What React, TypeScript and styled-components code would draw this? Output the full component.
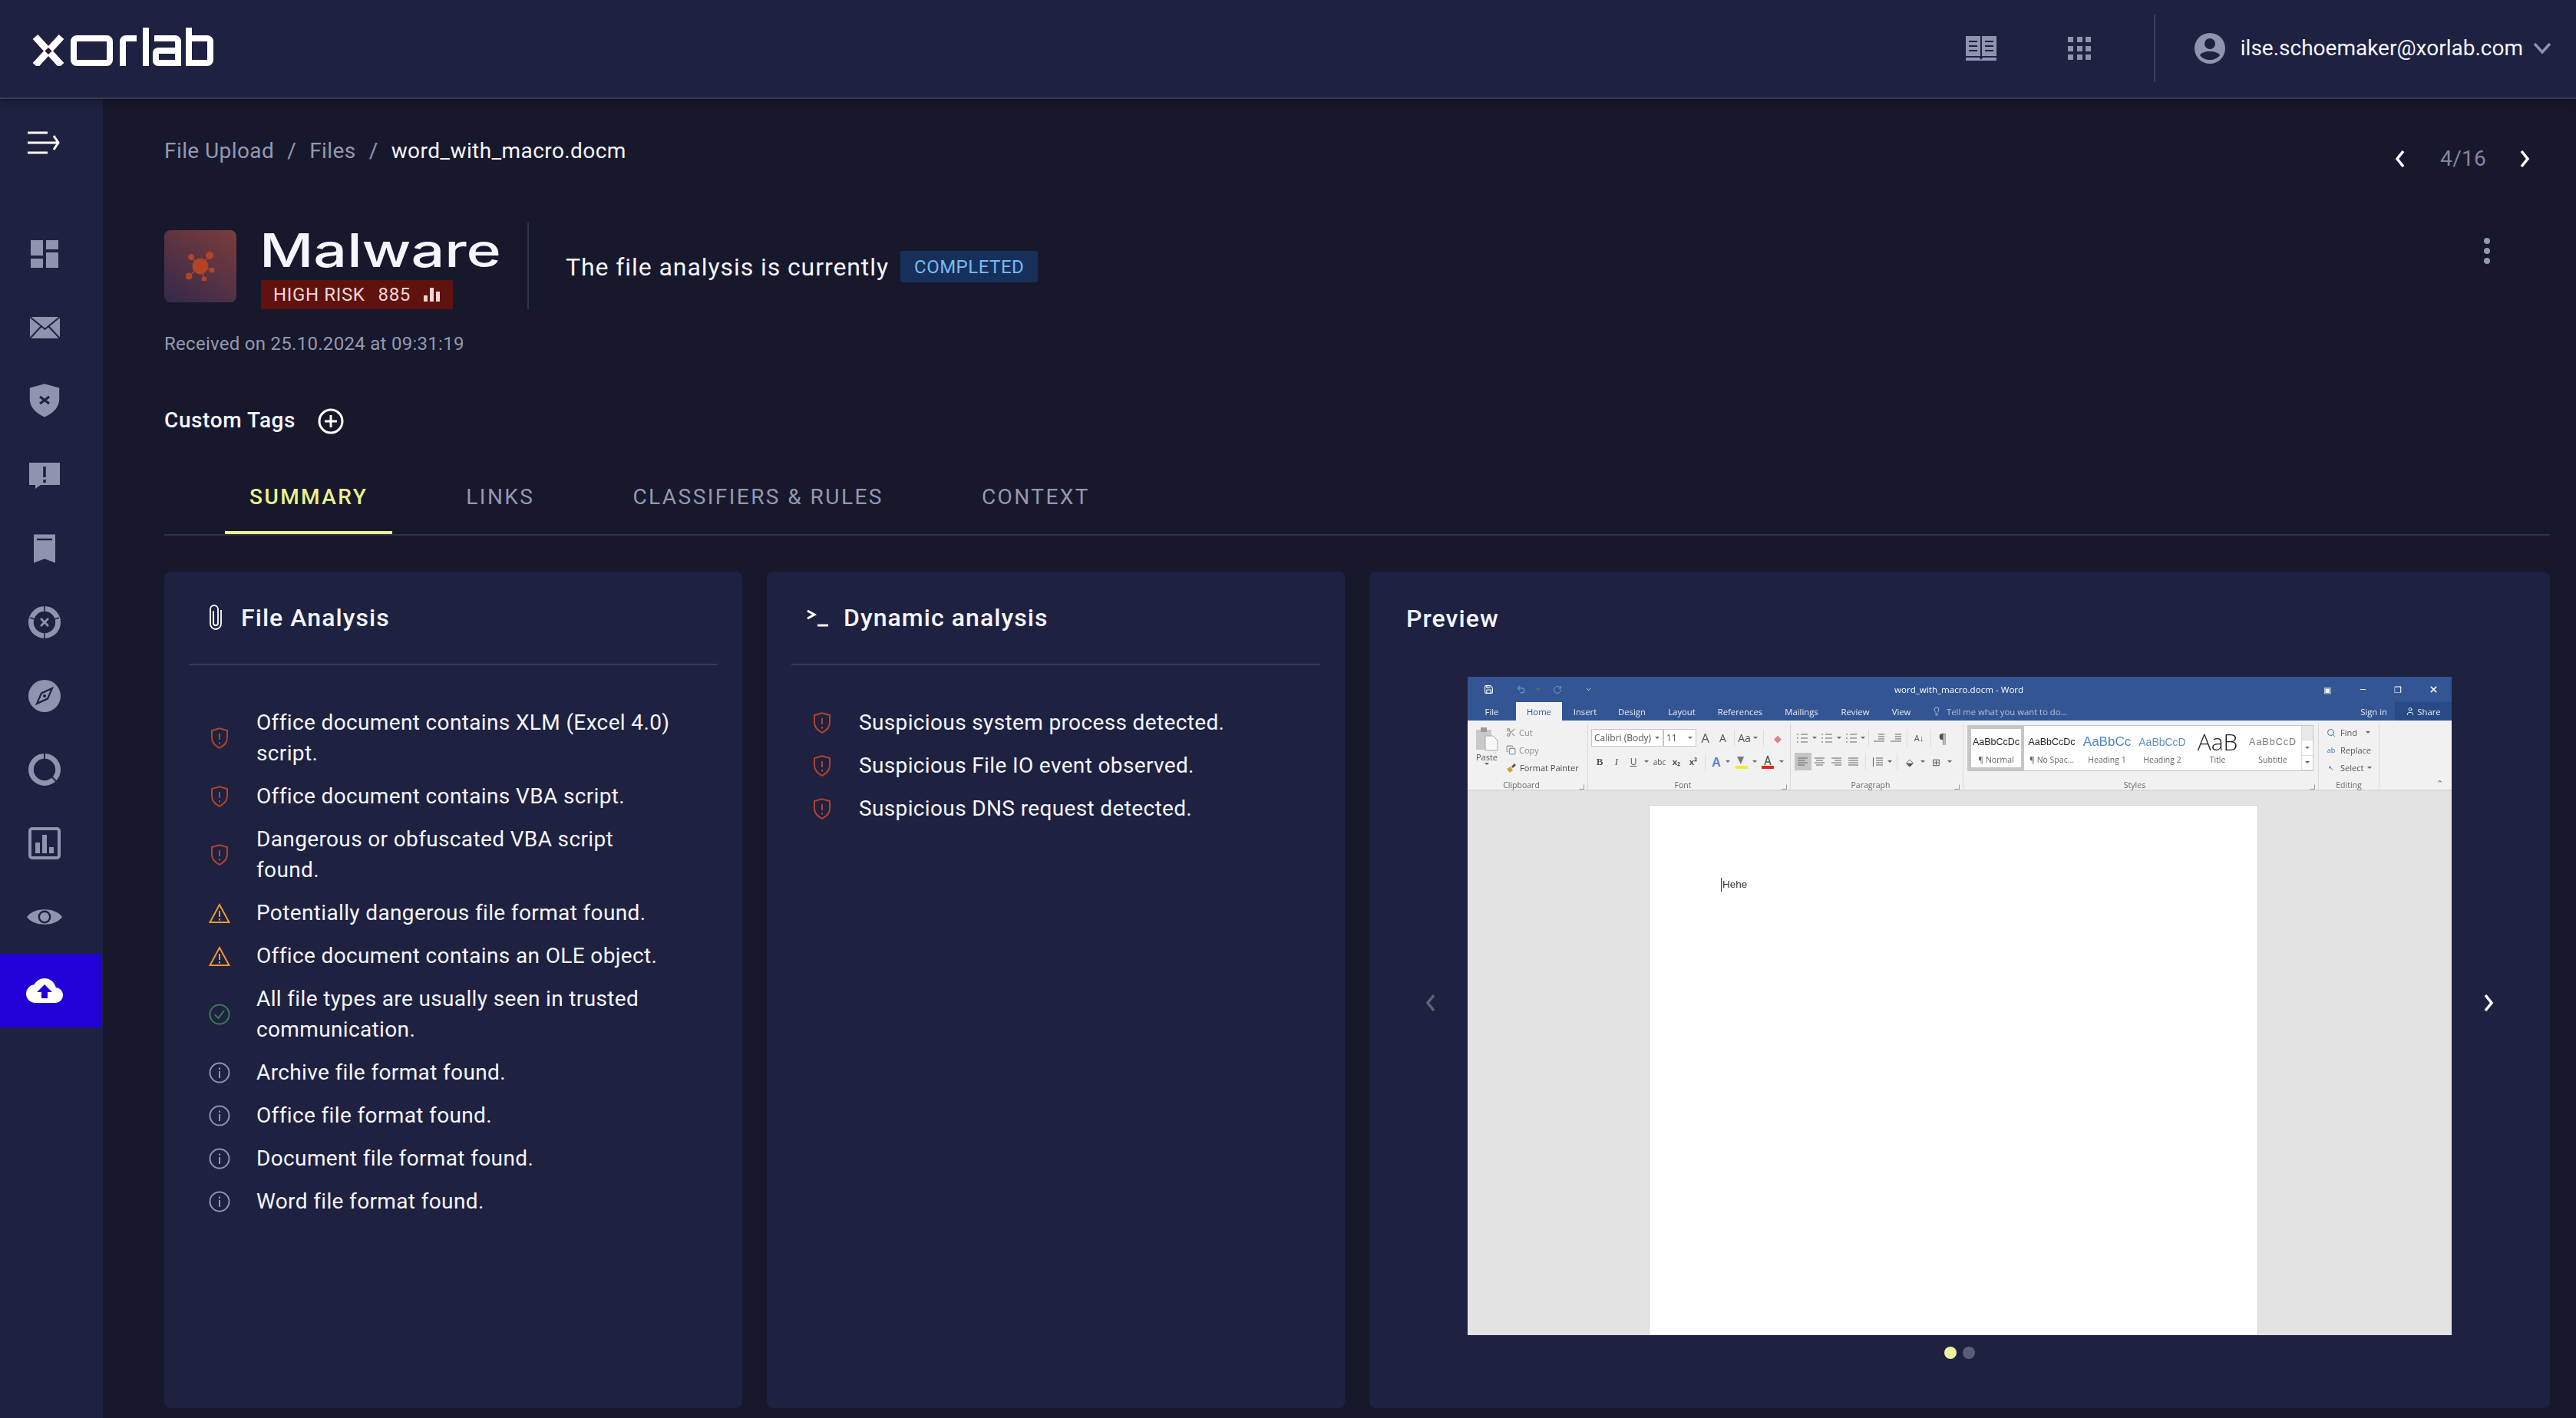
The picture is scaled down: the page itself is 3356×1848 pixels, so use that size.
import styled, { createGlobalStyle } from 'styled-components';
import { MdDashboard, MdCloudUpload } from 'react-icons/md';
import { ChevronDown, Copy, Lightbulb, Minus, RotateCw, Save, Scissors, Search, Undo2, User, X } from 'lucide-react';

const GlobalStyle = createGlobalStyle`
  html, body { margin: 0; padding: 0; background: #18182c; }
  body { font-family: Roboto, "Liberation Sans", sans-serif; color: #f4f6ff; }
  * { box-sizing: border-box; }
`;

const Page = styled.div`
  width: 3356px;
  height: 1848px;
  display: flex;
  flex-direction: column;
  overflow: hidden;
  background: #18182c;
`;

/* top bar */
const Header = styled.header`
  position: relative;
  z-index: 2;
  height: 129px;
  flex: none;
  display: flex;
  align-items: center;
  padding: 0 32px 2px 42px;
  background: #1e2140;
  border-bottom: 2px solid #363a52;
  box-shadow: 0 4px 12px rgba(0, 0, 0, 0.3);
`;

const Logo = styled.svg`
  width: 236px;
  height: 50px;
  margin-top: -4px;
  flex: none;
`;

const HeaderRight = styled.div`
  margin-left: auto;
  display: flex;
  align-items: center;
`;

const HeaderIcon = styled.svg`
  width: ${p => p.$w}px;
  height: 32px;
  margin-right: ${p => p.$mr}px;
  fill: #8f93b0;
  flex: none;
`;

const HeaderDivider = styled.div`
  width: 2px;
  height: 88px;
  margin-right: 51px;
  background: #3b3f5c;
`;

const Email = styled.span`
  margin: 0 13px 0 20px;
  font-size: 28px;
  line-height: 40px;
  font-weight: 400;
  color: #f4f6ff;
`;

/* below the top bar */
const Body = styled.div`
  flex: 1;
  min-height: 0;
  display: flex;
`;

const Sidebar = styled.nav`
  width: 134px;
  flex: none;
  display: flex;
  flex-direction: column;
  background: #1e2140;
`;

const MenuToggle = styled.div`
  height: 154px;
  padding: 42px 0 0 36px;
  color: #fff;
`;

const NavItem = styled.div`
  width: 132px;
  height: 96px;
  flex: none;
  display: flex;
  align-items: center;
  justify-content: center;
  padding-right: 16px;
  color: ${p => (p.$active ? '#fff' : '#8f93b0')};
  background: ${p => (p.$active ? '#2200d8' : 'transparent')};
`;

const Main = styled.main`
  flex: 1;
  min-width: 0;
  display: flex;
  flex-direction: column;
  padding: 48px 34px 13px 80px;
`;

const TopRow = styled.div`
  height: 40px;
  flex: none;
  display: flex;
  align-items: flex-start;
  justify-content: space-between;
`;

const Breadcrumb = styled.div`
  display: flex;
  font-size: 28px;
  line-height: 40px;
  letter-spacing: 0.42px;
  color: #9498b2;
`;

const Crumb = styled.span`
  color: ${p => (p.$current ? '#f4f6ff' : '#9498b2')};
`;

const Slash = styled.span`
  margin: 0 17px;
`;

const Pager = styled.div`
  display: flex;
  align-items: center;
  margin-top: 10px;
  margin-right: 25px;
  font-size: 28px;
  line-height: 40px;
  letter-spacing: 0.28px;
  color: #83869f;
`;

const PagerCount = styled.span`
  margin: 0 42px 0 44px;
`;

const Chevron = styled.svg`
  width: 16px;
  height: 24px;
  flex: none;
  fill: none;
  stroke: currentColor;
  stroke-width: 3.6;
`;

const TitleRow = styled.div`
  height: 113px;
  margin-top: 73px;
  flex: none;
  display: flex;
  align-items: flex-start;
`;

const ThreatIcon = styled.div`
  width: 94px;
  height: 94px;
  margin-top: 10px;
  flex: none;
  display: flex;
  align-items: center;
  justify-content: center;
  border-radius: 8px;
  background: linear-gradient(35deg, #33294c 0%, #7c3c3a 100%);
`;

const ThreatText = styled.div`
  width: 379px;
  padding-left: 32px;
  flex: none;
`;

const ThreatName = styled.div`
  height: 75px;
  margin-left: -2px;
  font-family: Inter, Roboto, sans-serif;
  font-size: 60px;
  font-weight: 500;
  line-height: 72px;
  white-space: nowrap;
  color: #f4f6ff;
  transform: scaleX(1.285);
  transform-origin: left center;
`;

const RiskBadge = styled.div`
  width: 250px;
  height: 38px;
  display: flex;
  align-items: center;
  padding-left: 16px;
  border-radius: 2px;
  font-size: 24px;
  letter-spacing: 0.65px;
  color: #f8d6d3;
  background: #5f120e;
`;

const RiskScore = styled.span`
  margin-left: 17px;
  margin-right: 17px;
`;

const TitleDivider = styled.div`
  width: 2px;
  height: 113px;
  flex: none;
  background: #303249;
`;

const StatusRow = styled.div`
  display: flex;
  align-items: center;
  height: 41px;
  margin: 37px 0 0 48px;
`;

const StatusText = styled.span`
  font-size: 32px;
  letter-spacing: 0.92px;
  color: #f4f6ff;
`;

const StatusBadge = styled.span`
  margin-left: 15px;
  height: 41px;
  display: flex;
  align-items: center;
  padding: 0 18px;
  border-radius: 2px;
  font-size: 24px;
  letter-spacing: 0.5px;
  color: #73bcf5;
  background: #17305a;
`;

const Kebab = styled.div`
  margin: 20px 78px 0 auto;
  display: flex;
  flex-direction: column;
  gap: 5px;
`;

const KebabDot = styled.span`
  width: 8px;
  height: 8px;
  border-radius: 50%;
  background: #9498b2;
`;

const Received = styled.div`
  margin-top: 29px;
  height: 32px;
  flex: none;
  font-size: 24px;
  line-height: 32px;
  letter-spacing: 0.28px;
  color: #9498b2;
`;

const TagsRow = styled.div`
  margin-top: 66px;
  height: 34px;
  flex: none;
  display: flex;
  align-items: center;
  gap: 29px;
  font-size: 28px;
  font-weight: 500;
  letter-spacing: 0.6px;
  color: #f4f6ff;
`;

const PlusIcon = styled.svg`
  width: 34px;
  height: 34px;
  margin-top: 3px;
`;

const TabBar = styled.div`
  margin-top: 50px;
  height: 84px;
  flex: none;
  display: flex;
  gap: 64px;
  padding-left: 79px;
  border-bottom: 2px solid #303249;
`;

const Tab = styled.div`
  height: 82px;
  padding: 0 32px;
  display: flex;
  align-items: flex-start;
  padding-top: 17px;
  font-size: 28px;
  line-height: 34px;
  font-weight: ${p => (p.$active ? 500 : 400)};
  letter-spacing: 2.45px;
  color: ${p => (p.$active ? '#e9f290' : '#9498b2')};
  border-bottom: 4px solid ${p => (p.$active ? '#e9f290' : 'transparent')};
`;

const Cards = styled.div`
  margin-top: 47px;
  flex: 1;
  min-height: 0;
  display: grid;
  grid-template-columns: 753px 753px 1538px;
  gap: 32px;
`;

const Card = styled.section`
  display: flex;
  flex-direction: column;
  border-radius: 8px;
  background: #1e2140;
`;

const CardHeader = styled.div`
  height: 122px;
  margin: 0 32px;
  padding-left: ${p => p.$pad}px;
  flex: none;
  display: flex;
  align-items: center;
  gap: ${p => p.$gap}px;
  border-bottom: ${p => (p.$plain ? 'none' : '2px solid #363a56')};
  font-size: 32px;
  font-weight: 500;
  letter-spacing: 1.06px;
  color: #f4f6ff;
`;

const FindingList = styled.ul`
  list-style: none;
  margin: 55px 0 0;
  padding: 0 0 0 58px;
  display: flex;
  flex-direction: column;
  gap: 16px;
`;

const Finding = styled.li`
  display: flex;
  align-items: center;
  gap: 34px;
`;

const FindingIcon = styled.svg`
  width: 28px;
  height: 28px;
  flex: none;
  fill: none;
  stroke: ${p => p.$color};
  stroke-width: 2;
`;

const FindingText = styled.span`
  width: 541px;
  font-size: 28px;
  line-height: 40px;
  letter-spacing: 0.36px;
  color: #f4f6ff;
`;

const Carousel = styled.div`
  margin-top: 15px;
  padding: 0 32px;
  display: flex;
  align-items: center;
`;

const CarouselArrow = styled.div`
  width: 96px;
  flex: none;
  display: flex;
  justify-content: center;
  padding-bottom: 8px;
  color: ${p => (p.$dim ? '#5f6278' : '#fff')};
`;

const Dots = styled.div`
  margin-top: 15px;
  display: flex;
  justify-content: center;
  gap: 8px;
`;

const Dot = styled.span`
  width: 16px;
  height: 16px;
  border-radius: 50%;
  background: ${p => (p.$on ? '#eef5a0' : '#5a5d78')};
`;

/* the Word window in the preview, a screenshot in the original */
const WordShot = styled.div`
  width: 1282px;
  height: 858px;
  flex: none;
  display: flex;
  flex-direction: column;
  overflow: hidden;
  background: #e3e3e3;
  font-family: "Open Sans", "Noto Sans", sans-serif;
  font-size: 11px;
  color: #555;
  filter: blur(0.3px);
`;

const WordTitleBar = styled.div`
  height: 33px;
  flex: none;
  display: flex;
  align-items: center;
  background: #335593;
  color: #fff;
`;

const WordCaption = styled.span`
  width: 168px;
  margin-left: 376px;
  font-size: 11.6px;
  white-space: nowrap;
`;

const Tool = styled.span`
  width: ${p => p.$w}px;
  height: 100%;
  flex: none;
  display: inline-flex;
  align-items: center;
  justify-content: center;
  margin-left: ${p => p.$ml || 0}px;
  white-space: nowrap;
  color: ${p => p.$color || 'inherit'};
  font-size: ${p => p.$size || 11}px;
  font-weight: ${p => (p.$bold ? 700 : 400)};
  font-style: ${p => (p.$italic ? 'italic' : 'normal')};
  font-family: ${p => (p.$serif ? '"Liberation Serif", serif' : 'inherit')};
  text-decoration: ${p => (p.$under ? 'underline' : 'none')};
  background: ${p => p.$bg || 'transparent'};
`;

const WordTabs = styled.div`
  height: 24px;
  flex: none;
  display: flex;
  align-items: stretch;
  background: #335593;
  color: #e8edf6;
  font-size: 11.3px;
`;

const WordTab = styled.span`
  width: ${p => p.$w}px;
  flex: none;
  display: flex;
  align-items: center;
  justify-content: center;
  color: ${p => (p.$active ? '#2f5597' : 'inherit')};
  background: ${p => (p.$active ? '#f1f1f1' : 'transparent')};
`;

const TellMe = styled.span`
  display: flex;
  align-items: center;
  gap: 7px;
  margin-left: 12px;
  color: #b3c1da;
`;

const SignIn = styled.span`
  margin-left: auto;
  display: flex;
  align-items: center;
  padding-right: 10px;
`;

const ShareButton = styled.span`
  width: 74px;
  display: flex;
  align-items: center;
  justify-content: center;
  gap: 3px;
  background: #2a4a85;
`;

const WordRibbon = styled.div`
  height: 92px;
  flex: none;
  display: flex;
  background: #f1f1f1;
  border-bottom: 2px solid #dadada;
`;

const RibbonGroup = styled.div`
  position: relative;
  width: ${p => p.$w}px;
  flex: none;
  display: flex;
  flex-direction: column;
  padding-top: ${p => p.$top || 0}px;
  margin-top: 4px;
  border-right: 1px solid #d9d9d9;
`;

const RibbonBody = styled.div`
  display: flex;
  flex-direction: column;
  flex: none;
  gap: ${p => p.$gap || 0}px;
  padding-left: ${p => p.$left || 0}px;
`;

const RibbonRow = styled.div`
  height: 23px;
  flex: none;
  display: flex;
  align-items: center;
`;

const RibbonLabel = styled.span`
  margin-top: auto;
  margin-bottom: -2px;
  height: 16px;
  line-height: 16px;
  text-align: center;
  padding-right: ${p => (p.$centered ? 0 : 16)}px;
  font-size: 10.5px;
  color: #6a6a6a;
`;

const Launcher = styled.span`
  position: absolute;
  right: 4px;
  bottom: 0;
  width: 7px;
  height: 7px;
  border: 1px solid #9a9a9a;
  border-top-color: transparent;
  border-left-color: transparent;
`;

const ClipboardBody = styled.div`
  flex: none;
  display: flex;
`;

const PasteCol = styled.div`
  width: 50px;
  flex: none;
  display: flex;
  flex-direction: column;
  align-items: center;
  padding-top: 4px;
  color: #555;
`;

const ClipCol = styled.div`
  display: flex;
  flex-direction: column;
`;

const ClipItem = styled.div`
  height: 23px;
  display: flex;
  align-items: center;
  gap: 4px;
  white-space: nowrap;
  color: ${p => (p.$muted ? '#8f8f8f' : '#4a4a4a')};
`;

const FontField = styled.span`
  width: ${p => p.$w}px;
  height: 23px;
  flex: none;
  display: flex;
  align-items: center;
  justify-content: space-between;
  padding: 0 4px 0 3px;
  background: #fff;
  border: 1px solid #c6c6c6;
  font-size: 12px;
  white-space: nowrap;
  color: #555;
`;

const Caret = styled.span`
  width: 0;
  height: 0;
  flex: none;
  margin-left: ${p => p.$ml || 0}px;
  border-left: 3px solid transparent;
  border-right: 3px solid transparent;
  border-top: 3px solid #666;
`;

const RibbonSep = styled.span`
  width: 1px;
  height: 22px;
  flex: none;
  margin: 0 ${p => p.$m}px;
  background: #dcdcdc;
`;

const StyleGallery = styled.div`
  width: 451px;
  height: 60px;
  margin: 2px 0 0 5px;
  display: flex;
  background: #fff;
  border: 1px solid #c6c6c6;
`;

const StyleCell = styled.div`
  width: ${p => p.$w || 72}px;
  flex: none;
  display: flex;
  flex-direction: column;
  align-items: center;
  border: ${p => (p.$on ? '4px solid #c6c6c6' : 'none')};
  padding-top: ${p => (p.$on ? 2 : 6)}px;
`;

const StylePreview = styled.span`
  height: 30px;
  line-height: 30px;
  text-align: center;
  white-space: nowrap;
  font-family: ${p => (p.$light ? '"Open Sans", sans-serif' : '"Liberation Sans", sans-serif')};
  font-weight: ${p => (p.$light ? 300 : 400)};
  font-size: ${p => p.$size || 12.5}px;
  letter-spacing: ${p => p.$track || 0}px;
  color: ${p => p.$color || '#222'};
`;

const StyleName = styled.span`
  font-size: 10.5px;
  line-height: 16px;
  white-space: nowrap;
  color: #666;
`;

const GalleryScroll = styled.div`
  margin-left: auto;
  width: 15px;
  display: flex;
  flex-direction: column;
  border-left: 1px solid #dadada;
`;

const ScrollCell = styled.span`
  flex: 1;
  display: flex;
  align-items: center;
  justify-content: center;
  background: ${p => (p.$dim ? '#e8e8e8' : '#fff')};
  border-bottom: 1px solid #dadada;
`;

const EditItem = styled.div`
  height: 23px;
  display: flex;
  align-items: center;
  gap: 5px;
  padding-left: 9px;
  color: #555;
  white-space: nowrap;
`;

const EditIcon = styled.span`
  width: 14px;
  flex: none;
  display: flex;
  justify-content: center;
  font-size: 9px;
  line-height: 8px;
  color: #3b6db5;
`;

const CollapseArea = styled.div`
  flex: 1;
  display: flex;
  align-items: flex-end;
  justify-content: flex-end;
  padding: 0 11px 1px 0;
  color: #666;
`;

const WordCanvas = styled.div`
  flex: 1;
  min-height: 0;
  padding: 18px 0 0 236px;
  display: flex;
`;

const WordPage = styled.div`
  width: 794px;
  background: #fff;
  border: 1px solid #d2d2d2;
  border-bottom: none;
  padding: 94px 0 0 93px;
`;

const WordText = styled.span`
  display: inline-block;
  height: 18px;
  padding-left: 1px;
  border-left: 1px solid #333;
  font-family: "Liberation Sans", sans-serif;
  font-size: 13.5px;
  line-height: 18px;
  color: #333;
`;

/* icons */
const sidebarStroke = '#1e2140';

const ChevronPrev = () => (
  <Chevron viewBox="0 0 16 24"><path d="M12 2L4 12l8 10" /></Chevron>
);

const ChevronNext = () => (
  <Chevron viewBox="0 0 16 24"><path d="M4 2l8 10-8 10" /></Chevron>
);

const MailIcon = () => (
  <svg width="48" height="48" viewBox="0 0 24 24">
    <rect x="2.500" y="5" width="19.500" height="14" fill="currentColor" />
    <path d="M2.500 5l9.750 8L22 5M2.500 19l7.500-8M22 19l-7.500-8" fill="none" stroke={sidebarStroke} strokeWidth="1" />
  </svg>
);

const ShieldXIcon = () => (
  <svg width="48" height="48" viewBox="0 0 24 24">
    <path d="M12 .6L2.400 3.200v7.400c0 5.200 4 9.300 9.600 11.600 5.600-2.300 9.600-6.400 9.600-11.600V3.200z" fill="currentColor" />
    <path d="M9 9l6 4.500M15 9l-6 4.500" stroke={sidebarStroke} strokeWidth="1.500" />
  </svg>
);

const ChatIcon = () => (
  <svg width="48" height="48" viewBox="0 0 24 24">
    <path d="M2 4h20v14.500H9.500L6 21v-2.500H2z" fill="currentColor" />
    <path d="M12 6.500v7M12 15v2" stroke={sidebarStroke} strokeWidth="1.800" />
  </svg>
);

const BookmarkIcon = () => (
  <svg width="48" height="48" viewBox="0 0 24 24">
    <path d="M5 2.800h14v18.500l-7-2.700-7 2.700z" fill="currentColor" />
    <path d="M7 6h10" stroke={sidebarStroke} strokeWidth="1.200" />
  </svg>
);

const RingXIcon = () => (
  <svg width="48" height="48" viewBox="0 0 24 24" fill="none">
    <circle cx="12" cy="12" r="8.800" stroke="currentColor" strokeWidth="3.400" />
    <path d="M12 1v4M12 19v4M2.500 9l3 1M21.500 9l-3 1" stroke={sidebarStroke} strokeWidth="0.800" />
    <path d="M9.500 9.500l5 5M14.500 9.500l-5 5" stroke="currentColor" strokeWidth="1.300" />
  </svg>
);

const CompassIcon = () => (
  <svg width="48" height="48" viewBox="0 0 24 24">
    <circle cx="12" cy="12" r="10.500" fill="currentColor" />
    <path d="M17 7l-7 3.200L7 17l7-3.200z" fill="none" stroke={sidebarStroke} strokeWidth="1.100" />
    <circle cx="12" cy="12" r="1" fill={sidebarStroke} />
  </svg>
);

const DonutIcon = () => (
  <svg width="48" height="48" viewBox="0 0 24 24" fill="none">
    <circle cx="12" cy="12" r="8.800" stroke="currentColor" strokeWidth="3.400" />
    <path d="M12 1v4M15.500 15.500l5 5" stroke={sidebarStroke} strokeWidth="1" />
  </svg>
);

const ChartIcon = () => (
  <svg width="48" height="48" viewBox="0 0 24 24">
    <rect x="2.500" y="2.500" width="19" height="19" rx="1.500" fill="none" stroke="currentColor" strokeWidth="2" />
    <path d="M6 11.500h3v7H6zM10.500 6.500h3v12h-3zM15 14.500h3v4h-3z" fill="currentColor" />
  </svg>
);

const EyeIcon = () => (
  <svg width="48" height="48" viewBox="0 0 24 24">
    <path d="M.5 12C5 5.500 19 5.500 23.500 12 19 18.500 5 18.500.5 12z" fill="currentColor" />
    <circle cx="12" cy="12" r="3.600" fill="none" stroke={sidebarStroke} strokeWidth="1.200" />
  </svg>
);

const ShieldAlert = () => (
  <FindingIcon $color="#b0432a" viewBox="0 0 28 28">
    <path d="M14 1.200L4 4v9.500c0 6 4 10.300 10 13.300 6-3 10-7.300 10-13.300V4z" />
    <path d="M14 8v8M14 19v2.500" />
  </FindingIcon>
);

const TriangleAlert = () => (
  <FindingIcon $color="#f09a30" viewBox="0 0 28 28">
    <path d="M14 3L1.500 26h25z" />
    <path d="M14 11v8M14 21v2.500" />
  </FindingIcon>
);

const CheckCircle = () => (
  <FindingIcon $color="#3c7a56" viewBox="0 0 28 28">
    <circle cx="14" cy="14" r="12.500" />
    <path d="M8 14.500l4.500 4.500 7.500-10" />
  </FindingIcon>
);

const InfoCircle = () => (
  <FindingIcon $color="#8f93b0" viewBox="0 0 28 28">
    <circle cx="14" cy="14" r="12.500" />
    <path d="M14 12v9M14 7.500v2.500" />
  </FindingIcon>
);

const MiniLines = ({ kind = 'left' }: { kind?: string }) => {
  const rows: Record<string, string> = {
    left: 'M1 2h13M1 5h9M1 8h13M1 11h9',
    center: 'M1 2h13M3 5h9M1 8h13M3 11h9',
    right: 'M1 2h13M5 5h9M1 8h13M5 11h9',
    justify: 'M1 2h13M1 5h13M1 8h13M1 11h13',
    bullet: 'M1 2h2M6 2h9M1 7h2M6 7h9M1 12h2M6 12h9',
    outdent: 'M7 2h8M7 5h8M7 8h8M1 11h14',
    spacing: 'M6 2h9M6 5h9M6 8h9M6 11h9M2.500 1v12',
  };
  return (
    <svg width="16" height="14" viewBox="0 0 16 14" fill="none" stroke="#666" strokeWidth="1.100">
      <path d={rows[kind]} />
    </svg>
  );
};

const findings = [
  { icon: <ShieldAlert />, text: 'Office document contains XLM (Excel 4.0) script.' },
  { icon: <ShieldAlert />, text: 'Office document contains VBA script.' },
  { icon: <ShieldAlert />, text: 'Dangerous or obfuscated VBA script found.' },
  { icon: <TriangleAlert />, text: 'Potentially dangerous file format found.' },
  { icon: <TriangleAlert />, text: 'Office document contains an OLE object.' },
  { icon: <CheckCircle />, text: 'All file types are usually seen in trusted communication.' },
  { icon: <InfoCircle />, text: 'Archive file format found.' },
  { icon: <InfoCircle />, text: 'Office file format found.' },
  { icon: <InfoCircle />, text: 'Document file format found.' },
  { icon: <InfoCircle />, text: 'Word file format found.' },
];

const dynamicFindings = [
  'Suspicious system process detected.',
  'Suspicious File IO event observed.',
  'Suspicious DNS request detected.',
];

const wordTabs = [
  ['File', 63],
  ['Home', 60],
  ['Insert', 60],
  ['Design', 62],
  ['Layout', 68],
  ['References', 84],
  ['Mailings', 76],
  ['Review', 64],
  ['View', 56],
] as const;

const WordWindow = () => (
  <WordShot>
    <WordTitleBar>
      <Tool $w={54}><Save size={13} /></Tool>
      <Tool $w={30} $color="#7d95c0"><Undo2 size={13} /></Tool>
      <Tool $w={16} $color="#7d95c0"><Caret /></Tool>
      <Tool $w={34} $color="#7d95c0"><RotateCw size={12} /></Tool>
      <Tool $w={46}><ChevronDown size={9} /></Tool>
      <WordCaption>word_with_macro.docm - Word</WordCaption>
      <Tool $w={46} $ml={373}>▣</Tool>
      <Tool $w={46}><Minus size={11} /></Tool>
      <Tool $w={46}>❐</Tool>
      <Tool $w={46}><X size={13} strokeWidth={3} /></Tool>
    </WordTitleBar>
    <WordTabs>
      {wordTabs.map(([name, w]) => (
        <WordTab key={name} $w={w} $active={name === 'Home'}>{name}</WordTab>
      ))}
      <TellMe><Lightbulb size={12} />Tell me what you want to do...</TellMe>
      <SignIn>Sign in</SignIn>
      <ShareButton><User size={12} />Share</ShareButton>
    </WordTabs>
    <WordRibbon>
      <RibbonGroup $w={157}>
        <ClipboardBody>
          <PasteCol>
            <svg width="30" height="32" viewBox="0 0 30 32">
              <rect x="1" y="4" width="20" height="26" fill="#c9c9c9" />
              <rect x="7" y="1" width="8" height="6" fill="#9a9a9a" />
              <path d="M13 12h10l6 6v13H13z" fill="#f7f7f7" stroke="#a8a8a8" />
            </svg>
            <span>Paste</span>
            <Caret />
          </PasteCol>
          <ClipCol>
            <ClipItem $muted><Scissors size={13} />Cut</ClipItem>
            <ClipItem $muted><Copy size={13} />Copy</ClipItem>
            <ClipItem>
              <svg width="14" height="14" viewBox="0 0 14 14">
                <path d="M1 8l5-3 3 5-4 3z" fill="#d8a23a" />
                <path d="M7 5l4-4 2 2-4 4z" fill="#555" />
              </svg>
              Format Painter
            </ClipItem>
          </ClipCol>
        </ClipboardBody>
        <RibbonLabel>Clipboard</RibbonLabel>
        <Launcher />
      </RibbonGroup>

      <RibbonGroup $w={264} $top={7}>
        <RibbonBody $gap={8} $left={4}>
          <RibbonRow>
            <FontField $w={94}>Calibri (Body)<Caret /></FontField>
            <FontField $w={43}>11<Caret /></FontField>
            <Tool $w={23} $size={17}>A</Tool>
            <Tool $w={23} $size={14}>A</Tool>
            <RibbonSep $m={3} />
            <Tool $w={28} $size={14}>Aa<Caret $ml={3} /></Tool>
            <RibbonSep $m={6} />
            <Tool $w={24} $color="#d88490" $size={13}>◆</Tool>
          </RibbonRow>
          <RibbonRow>
            <Tool $w={22} $bold $serif $size={13}>B</Tool>
            <Tool $w={22} $italic $serif $size={13}>I</Tool>
            <Tool $w={22} $under $size={12}>U</Tool>
            <Tool $w={12}><Caret /></Tool>
            <Tool $w={22} $size={10}>abc</Tool>
            <Tool $w={22} $bold $size={11}>x₂</Tool>
            <Tool $w={22} $bold $size={11}>x²</Tool>
            <RibbonSep $m={4} />
            <Tool $w={20} $color="#5b86c4" $bold $size={16}>A</Tool>
            <Tool $w={10}><Caret /></Tool>
            <Tool $w={26} $size={11}>
              <svg width="18" height="18" viewBox="0 0 18 18">
                <path d="M3 2h9l-4 10z" fill="#777" />
                <rect x="1" y="14" width="16" height="4" fill="#f5e83c" />
              </svg>
            </Tool>
            <Tool $w={8}><Caret /></Tool>
            <Tool $w={26}>
              <svg width="18" height="18" viewBox="0 0 18 18">
                <path d="M9 1l4 12M9 1L5 13M6.500 9h5" stroke="#555" strokeWidth="1.500" fill="none" />
                <rect x="1" y="14" width="16" height="4" fill="#e8251b" />
              </svg>
            </Tool>
            <Tool $w={10}><Caret /></Tool>
          </RibbonRow>
        </RibbonBody>
        <RibbonLabel>Font</RibbonLabel>
        <Launcher />
      </RibbonGroup>

      <RibbonGroup $w={225} $top={7}>
        <RibbonBody $gap={8} $left={5}>
          <RibbonRow>
            <Tool $w={20}><MiniLines kind="bullet" /></Tool>
            <Tool $w={12}><Caret /></Tool>
            <Tool $w={20}><MiniLines kind="bullet" /></Tool>
            <Tool $w={12}><Caret /></Tool>
            <Tool $w={20}><MiniLines kind="bullet" /></Tool>
            <Tool $w={10}><Caret /></Tool>
            <RibbonSep $m={2} />
            <Tool $w={22}><MiniLines kind="outdent" /></Tool>
            <Tool $w={22}><MiniLines kind="outdent" /></Tool>
            <RibbonSep $m={3} />
            <Tool $w={24} $size={11}>A↓</Tool>
            <RibbonSep $m={3} />
            <Tool $w={24} $size={16}>¶</Tool>
          </RibbonRow>
          <RibbonRow>
            <Tool $w={22} $bg="#c6c6c6"><MiniLines kind="left" /></Tool>
            <Tool $w={22}><MiniLines kind="center" /></Tool>
            <Tool $w={22}><MiniLines kind="right" /></Tool>
            <Tool $w={22}><MiniLines kind="justify" /></Tool>
            <RibbonSep $m={4} />
            <Tool $w={22}><MiniLines kind="spacing" /></Tool>
            <Tool $w={10}><Caret /></Tool>
            <RibbonSep $m={4} />
            <Tool $w={24} $size={13}>⬙</Tool>
            <Tool $w={10}><Caret /></Tool>
            <Tool $w={24} $size={13}>⊞</Tool>
            <Tool $w={12}><Caret /></Tool>
          </RibbonRow>
        </RibbonBody>
        <RibbonLabel>Paragraph</RibbonLabel>
        <Launcher />
      </RibbonGroup>

      <RibbonGroup $w={463}>
        <StyleGallery>
          <StyleCell $on $w={73}>
            <StylePreview>AaBbCcDc</StylePreview>
            <StyleName>¶ Normal</StyleName>
          </StyleCell>
          <StyleCell>
            <StylePreview>AaBbCcDc</StylePreview>
            <StyleName>¶ No Spac...</StyleName>
          </StyleCell>
          <StyleCell>
            <StylePreview $size={17} $color="#4d83c4">AaBbCc</StylePreview>
            <StyleName>Heading 1</StyleName>
          </StyleCell>
          <StyleCell>
            <StylePreview $size={14} $color="#5f8fcb">AaBbCcD</StylePreview>
            <StyleName>Heading 2</StyleName>
          </StyleCell>
          <StyleCell>
            <StylePreview $size={30} $light>AaB</StylePreview>
            <StyleName>Title</StyleName>
          </StyleCell>
          <StyleCell>
            <StylePreview $track={1} $color="#777">AaBbCcD</StylePreview>
            <StyleName>Subtitle</StyleName>
          </StyleCell>
          <GalleryScroll>
            <ScrollCell $dim />
            <ScrollCell><Caret /></ScrollCell>
            <ScrollCell><Caret /></ScrollCell>
          </GalleryScroll>
        </StyleGallery>
        <RibbonLabel>Styles</RibbonLabel>
        <Launcher />
      </RibbonGroup>

      <RibbonGroup $w={79}>
        <RibbonBody>
          <EditItem><EditIcon><Search size={12} /></EditIcon>Find<Caret $ml={6} /></EditItem>
          <EditItem><EditIcon>ab</EditIcon>Replace</EditItem>
          <EditItem><EditIcon>↖</EditIcon>Select<Caret /></EditItem>
        </RibbonBody>
        <RibbonLabel $centered>Editing</RibbonLabel>
      </RibbonGroup>
      <CollapseArea>⌃</CollapseArea>
    </WordRibbon>
    <WordCanvas>
      <WordPage>
        <WordText>Hehe</WordText>
      </WordPage>
    </WordCanvas>
  </WordShot>
);

export default function App() {
  return (
    <Page>
      <GlobalStyle />
      <Header>
        <Logo viewBox="42 36 236 50" aria-label="xorlab">
          <path d="M46 48l34 37M80 48L46 85" stroke="#fff" strokeWidth="9" fill="none" />
          <path d="M63 62l4.500 4.500-4.500 4.500-4.500-4.500z" fill="#1e2140" />
          <g fill="none" stroke="#fff" strokeWidth="8">
            <rect x="96" y="50" width="47" height="32" rx="4" />
            <path d="M160 86V54a4 4 0 0 1 4-4h14M190 36v50" />
            <path d="M201 50h27a4 4 0 0 1 4 4v28h-26a3 3 0 0 1-3-3v-10a3 3 0 0 1 3-3h26" />
            <path d="M246 36v46h24a4 4 0 0 0 4-4V54a4 4 0 0 0-4-4h-24" />
          </g>
        </Logo>
        <HeaderRight>
          <HeaderIcon $w={40} $mr={93} viewBox="0 0 40 32">
            <path fillRule="evenodd" d="M0 0h19v26H0zM21 0h19v26H21zM0 28h18l2 3 2-3h18v4H0zM4 6v2h11V6zM4 12v2h11v-2zM4 18v2h11v-2zM25 6v2h11V6zM25 12v2h11v-2zM25 18v2h11v-2z" />
          </HeaderIcon>
          <HeaderIcon $w={30} $mr={82} viewBox="0 0 30 30">
            <path d="M0 0h7v7H0zM12 0h7v7h-7zM23 0h7v7h-7zM0 12h7v7H0zM12 12h7v7h-7zM23 12h7v7h-7zM0 23h7v7H0zM12 23h7v7h-7zM23 23h7v7h-7z" />
          </HeaderIcon>
          <HeaderDivider />
          <svg width="40" height="40" viewBox="0 0 40 40">
            <path fillRule="evenodd" fill="#8f93b0" d="M20 0a20 20 0 1 0 0 40 20 20 0 0 0 0-40zm0 7a7 7 0 1 1 0 14 7 7 0 0 1 0-14zm0 28c-5 0-10-2-13-6 1-3 7-5 13-5s12 2 13 5c-3 4-8 6-13 6z" />
          </svg>
          <Email>ilse.schoemaker@xorlab.com</Email>
          <svg width="24" height="16" viewBox="0 0 24 16" fill="none" stroke="#8f93b0" strokeWidth="3.500">
            <path d="M2 2l10 11L22 2" />
          </svg>
        </HeaderRight>
      </Header>
      <Body>
        <Sidebar>
          <MenuToggle>
            <svg width="42" height="30" viewBox="0 0 42 30" fill="none" stroke="currentColor" strokeWidth="3">
              <path d="M0 2h26M0 15h38M0 28h26" />
              <path d="M34 6l6 9-6 9" />
            </svg>
          </MenuToggle>
          <NavItem><MdDashboard size={48} /></NavItem>
          <NavItem><MailIcon /></NavItem>
          <NavItem><ShieldXIcon /></NavItem>
          <NavItem><ChatIcon /></NavItem>
          <NavItem><BookmarkIcon /></NavItem>
          <NavItem><RingXIcon /></NavItem>
          <NavItem><CompassIcon /></NavItem>
          <NavItem><DonutIcon /></NavItem>
          <NavItem><ChartIcon /></NavItem>
          <NavItem><EyeIcon /></NavItem>
          <NavItem $active><MdCloudUpload size={48} /></NavItem>
        </Sidebar>
        <Main>
          <TopRow>
            <Breadcrumb>
              <Crumb>File Upload</Crumb>
              <Slash>/</Slash>
              <Crumb>Files</Crumb>
              <Slash>/</Slash>
              <Crumb $current>word_with_macro.docm</Crumb>
            </Breadcrumb>
            <Pager>
              <Chevron viewBox="0 0 16 24" color="#fff"><path d="M12 2L4 12l8 10" /></Chevron>
              <PagerCount>4/16</PagerCount>
              <Chevron viewBox="0 0 16 24" color="#fff"><path d="M4 2l8 10-8 10" /></Chevron>
            </Pager>
          </TopRow>
          <TitleRow>
            <ThreatIcon>
              <svg width="38" height="38" viewBox="0 0 38 38" fill="#b34527" stroke="#b34527">
                <circle cx="19" cy="19" r="10" />
                <circle cx="7" cy="7" r="3.500" />
                <circle cx="31" cy="5" r="4.500" />
                <circle cx="34" cy="24" r="3" />
                <circle cx="24" cy="36" r="3" />
                <circle cx="4" cy="32" r="4" />
                <path d="M7 7l12 12M31 5L19 19M34 24l-15-5M24 36l-5-17M4 32l15-13" strokeWidth="1.500" />
              </svg>
            </ThreatIcon>
            <ThreatText>
              <ThreatName>Malware</ThreatName>
              <RiskBadge>
                HIGH RISK
                <RiskScore>885</RiskScore>
                <svg width="21" height="18" viewBox="0 0 21 18" fill="#f8d6d3">
                  <path d="M0 10h5v8H0zM8 0h5v18H8zM16 5h5v13h-5z" />
                </svg>
              </RiskBadge>
            </ThreatText>
            <TitleDivider />
            <StatusRow>
              <StatusText>The file analysis is currently</StatusText>
              <StatusBadge>COMPLETED</StatusBadge>
            </StatusRow>
            <Kebab>
              <KebabDot />
              <KebabDot />
              <KebabDot />
            </Kebab>
          </TitleRow>
          <Received>Received on 25.10.2024 at 09:31:19</Received>
          <TagsRow>
            Custom Tags
            <PlusIcon viewBox="0 0 34 34" fill="none" stroke="#fff" strokeWidth="3">
              <circle cx="17" cy="17" r="15" />
              <path d="M9 17h16M17 9v16" />
            </PlusIcon>
          </TagsRow>
          <TabBar>
            <Tab $active>SUMMARY</Tab>
            <Tab>LINKS</Tab>
            <Tab>CLASSIFIERS &amp; RULES</Tab>
            <Tab>CONTEXT</Tab>
          </TabBar>
          <Cards>
            <Card>
              <CardHeader $pad={26} $gap={24}>
                <svg width="18" height="34" viewBox="0 0 18 34" fill="none" stroke="#fff" strokeWidth="1.800">
                  <path d="M16 7v18a7 7 0 0 1-14 0V6a5 5 0 0 1 10 0v18a3 3 0 0 1-6 0V8" />
                </svg>
                File Analysis
              </CardHeader>
              <FindingList>
                {findings.map(f => (
                  <Finding key={f.text}>
                    {f.icon}
                    <FindingText>{f.text}</FindingText>
                  </Finding>
                ))}
              </FindingList>
            </Card>
            <Card>
              <CardHeader $pad={20} $gap={20}>
                <svg width="28" height="24" viewBox="0 0 28 24" fill="none" stroke="#fff" strokeWidth="3">
                  <path d="M1 3l9 5-9 5M14 22h14" />
                </svg>
                Dynamic analysis
              </CardHeader>
              <FindingList>
                {dynamicFindings.map(text => (
                  <Finding key={text}>
                    <ShieldAlert />
                    <FindingText>{text}</FindingText>
                  </Finding>
                ))}
              </FindingList>
            </Card>
            <Card>
              <CardHeader $plain $pad={16} $gap={0}>Preview</CardHeader>
              <Carousel>
                <CarouselArrow $dim><ChevronPrev /></CarouselArrow>
                <WordWindow />
                <CarouselArrow><ChevronNext /></CarouselArrow>
              </Carousel>
              <Dots>
                <Dot $on />
                <Dot />
              </Dots>
            </Card>
          </Cards>
        </Main>
      </Body>
    </Page>
  );
}
